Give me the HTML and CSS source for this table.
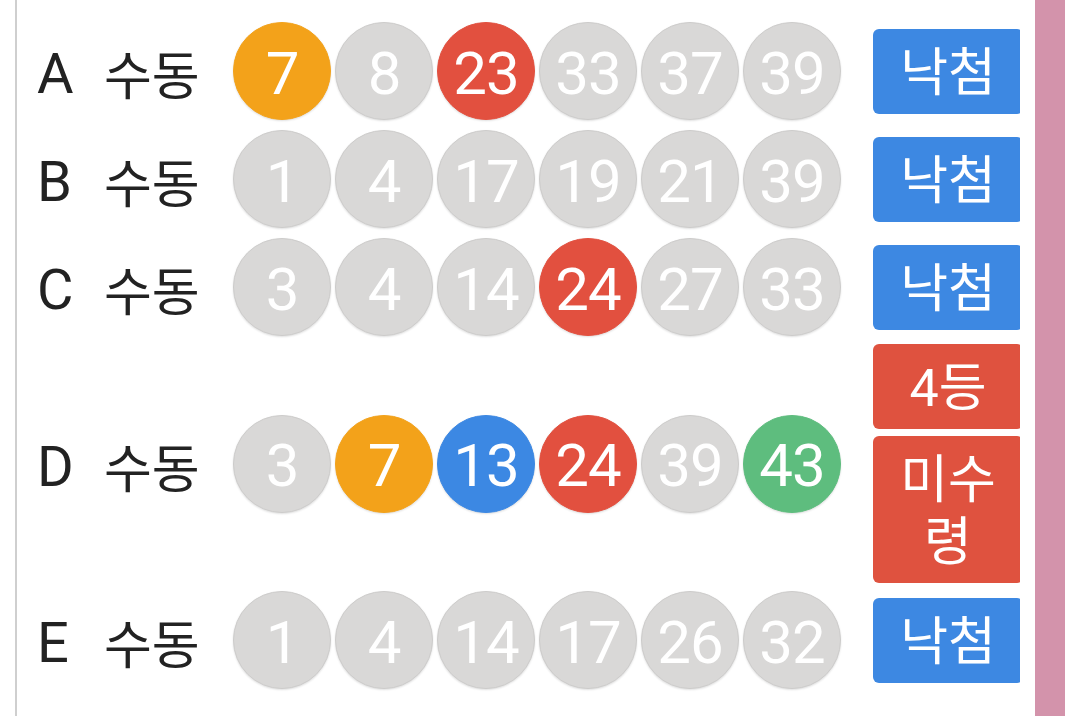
FILE: index.html
```html
<!DOCTYPE html>
<html lang="ko">
<head>
<meta charset="utf-8">
<link rel="stylesheet" href="styles.css">
</head>
<body>
<div class="page">
  <div class="sheet">
    <div class="row">
      <span class="letter">A</span><span class="label">수동</span>
      <div class="balls">
        <span class="ball orange">7</span><span class="ball">8</span><span class="ball red">23</span><span class="ball">33</span><span class="ball">37</span><span class="ball">39</span>
      </div>
      <div class="result"><span class="btn blue">낙첨</span></div>
    </div>
    <div class="row">
      <span class="letter">B</span><span class="label">수동</span>
      <div class="balls">
        <span class="ball">1</span><span class="ball">4</span><span class="ball">17</span><span class="ball">19</span><span class="ball">21</span><span class="ball">39</span>
      </div>
      <div class="result"><span class="btn blue">낙첨</span></div>
    </div>
    <div class="row">
      <span class="letter">C</span><span class="label">수동</span>
      <div class="balls">
        <span class="ball">3</span><span class="ball">4</span><span class="ball">14</span><span class="ball red">24</span><span class="ball">27</span><span class="ball">33</span>
      </div>
      <div class="result"><span class="btn blue">낙첨</span></div>
    </div>
    <div class="row">
      <span class="letter">D</span><span class="label">수동</span>
      <div class="balls">
        <span class="ball">3</span><span class="ball orange">7</span><span class="ball blue">13</span><span class="ball red">24</span><span class="ball">39</span><span class="ball green">43</span>
      </div>
      <div class="result"><span class="btn red">4등</span><span class="btn red">미수령</span></div>
    </div>
    <div class="row">
      <span class="letter">E</span><span class="label">수동</span>
      <div class="balls">
        <span class="ball">1</span><span class="ball">4</span><span class="ball">14</span><span class="ball">17</span><span class="ball">26</span><span class="ball">32</span>
      </div>
      <div class="result"><span class="btn blue">낙첨</span></div>
    </div>
  </div>
  <div class="side"></div>
</div>
</body>
</html>
```
FILE: styles.css
```css
html, body {
  margin: 0;
  padding: 0;
  background: #ffffff;
}
body {
  width: 1080px;
  height: 716px;
  overflow: hidden;
  font-family: "Roboto", "Noto Sans CJK KR", sans-serif;
  color: #222222;
}
.page {
  display: flex;
  height: 716px;
  padding-left: 15px;
}
.sheet {
  width: 1003px;
  border-left: 2px solid #cfcfcf;
  overflow: hidden;
  padding-top: 17px;
  flex-shrink: 0;
}
.side {
  width: 30px;
  margin-left: 15px;
  background: #d393ab;
  flex-shrink: 0;
}
.row {
  display: flex;
  align-items: center;
  min-height: 108px;
}
.row > * {
  flex-shrink: 0;
}
.letter {
  width: 67px;
  margin-left: 20px;
  font-size: 56px;
  line-height: 1;
  padding-top: 6px;
}
.label {
  width: 129px;
  font-family: "Noto Sans CJK KR", sans-serif;
  font-size: 52px;
  line-height: 1;
  padding-top: 4px;
}
.balls {
  display: flex;
  gap: 4px;
  width: 608px;
}
.ball {
  width: 98px;
  height: 98px;
  box-sizing: border-box;
  border-radius: 50%;
  display: flex;
  align-items: center;
  justify-content: center;
  font-size: 60px;
  color: #ffffff;
  letter-spacing: -1px;
  background: #d9d8d7;
  border: 1px solid #cdcccb;
  box-shadow: 0 1px 2px rgba(0, 0, 0, 0.12);
  padding-top: 4px;
}
.ball.orange { background: #f3a21a; border-color: #f3a21a; }
.ball.red { background: #e2503f; border-color: #e2503f; }
.ball.blue { background: #3c88e3; border-color: #3c88e3; }
.ball.green { background: #5ebd7e; border-color: #5ebd7e; }
.result {
  margin-left: 32px;
  display: flex;
  flex-direction: column;
  gap: 7px;
  padding: 3px 0;
}
.btn {
  width: 150px;
  box-sizing: border-box;
  border-radius: 6px;
  color: #ffffff;
  font-family: "Roboto", "Noto Sans CJK KR", sans-serif;
  font-size: 52px;
  line-height: 62px;
  padding: 14px 6px 9px;
  text-align: center;
  word-break: break-all;
}
.btn.blue { background: #3d88e2; }
.btn.red { background: #df523f; }
```
